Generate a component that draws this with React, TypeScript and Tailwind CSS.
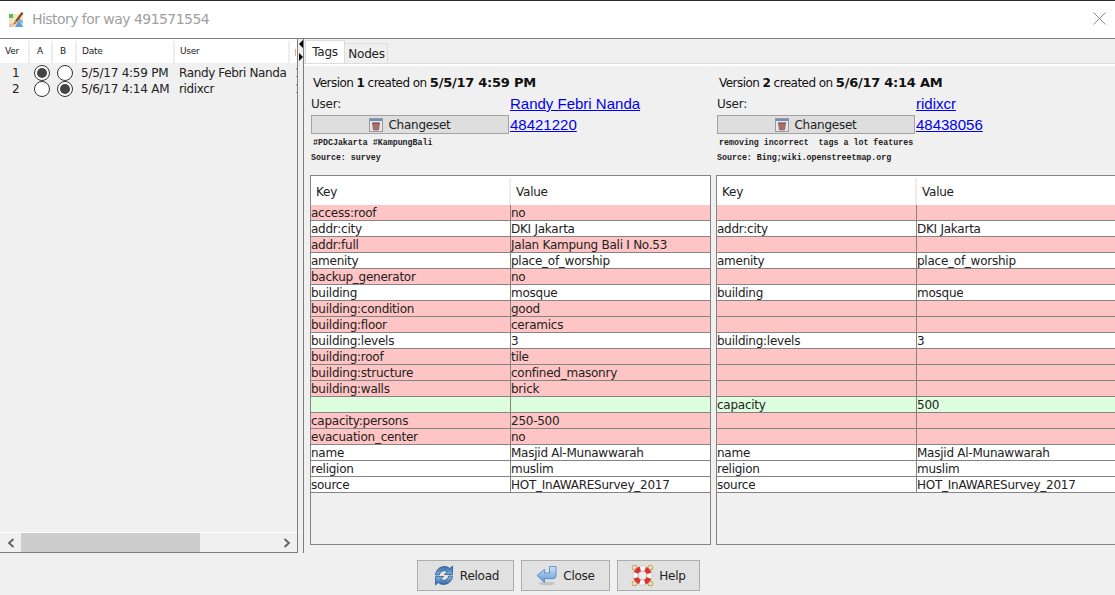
import React from "react";

const tahoma = "font-['DejaVu_Sans',sans-serif]";

type Row = { key: string; value: string; a: "red" | "white" | "green"; inA: boolean; inB: boolean };

const rows: Row[] = [
  { key: "access:roof", value: "no", a: "red", inA: true, inB: false },
  { key: "addr:city", value: "DKI Jakarta", a: "white", inA: true, inB: true },
  { key: "addr:full", value: "Jalan Kampung Bali I No.53", a: "red", inA: true, inB: false },
  { key: "amenity", value: "place_of_worship", a: "white", inA: true, inB: true },
  { key: "backup_generator", value: "no", a: "red", inA: true, inB: false },
  { key: "building", value: "mosque", a: "white", inA: true, inB: true },
  { key: "building:condition", value: "good", a: "red", inA: true, inB: false },
  { key: "building:floor", value: "ceramics", a: "red", inA: true, inB: false },
  { key: "building:levels", value: "3", a: "white", inA: true, inB: true },
  { key: "building:roof", value: "tile", a: "red", inA: true, inB: false },
  { key: "building:structure", value: "confined_masonry", a: "red", inA: true, inB: false },
  { key: "building:walls", value: "brick", a: "red", inA: true, inB: false },
  { key: "capacity", value: "500", a: "green", inA: false, inB: true },
  { key: "capacity:persons", value: "250-500", a: "red", inA: true, inB: false },
  { key: "evacuation_center", value: "no", a: "red", inA: true, inB: false },
  { key: "name", value: "Masjid Al-Munawwarah", a: "white", inA: true, inB: true },
  { key: "religion", value: "muslim", a: "white", inA: true, inB: true },
  { key: "source", value: "HOT_InAWARESurvey_2017", a: "white", inA: true, inB: true },
];

const rowBg = { red: "bg-[#ffc4c4]", white: "bg-white", green: "bg-[#deffde]" };

function Radio({ on }: { on: boolean }) {
  return (
    <span className="flex h-[16px] w-[16px] items-center justify-center rounded-full border border-[#333] bg-white">
      {on && <span className="h-[10px] w-[10px] rounded-full bg-[#444]" />}
    </span>
  );
}

function ChangesetIcon() {
  return (
    <svg width="14" height="14" viewBox="0 0 14 14">
      <rect x="0.5" y="0.5" width="13" height="13" fill="#e8e8e8" stroke="#9a9a9a" />
      <rect x="1" y="1" width="12" height="2" fill="#6b8fc4" />
      <path d="M3.500 5h7l-.8 7H4.300z" fill="#a86f6a" stroke="#7a4a48" strokeWidth="0.5" />
      <rect x="3" y="4.500" width="8" height="1.500" fill="#8e5a56" />
    </svg>
  );
}

function ReloadIcon() {
  return (
    <svg width="20" height="21" viewBox="0 0 20 21">
      <defs>
        <linearGradient id="reloadTop" x1="0" y1="0" x2="0" y2="1">
          <stop offset="0" stopColor="#2f6aa8" />
          <stop offset="1" stopColor="#7fb0df" />
        </linearGradient>
        <linearGradient id="reloadBottom" x1="0" y1="0" x2="0" y2="1">
          <stop offset="0" stopColor="#8db9e3" />
          <stop offset="1" stopColor="#2b649f" />
        </linearGradient>
      </defs>
      <path d="M1.500 10C2 4.500 6 1.500 10.500 1.500c2.300 0 4 .8 5.300 2L18.500 1v8.500h-8l2.700-2.700c-.8-.7-1.800-1.100-3-1.100-2.500 0-4.500 1.700-4.900 4.300z" fill="url(#reloadTop)" stroke="#1f4f85" strokeWidth="0.7" />
      <path d="M18.500 11c-.5 5.500-4.500 8.500-9 8.500-2.300 0-4-.8-5.300-2L1.500 20v-8.500h8l-2.700 2.700c.8.700 1.800 1.100 3 1.100 2.500 0 4.500-1.700 4.900-4.300z" fill="url(#reloadBottom)" stroke="#1f4f85" strokeWidth="0.7" />
    </svg>
  );
}

function CloseIcon() {
  return (
    <svg width="21" height="21" viewBox="0 0 21 21">
      <defs>
        <linearGradient id="closeArrow" x1="0" y1="0" x2="0" y2="1">
          <stop offset="0" stopColor="#cfe2f7" />
          <stop offset="1" stopColor="#5f95d4" />
        </linearGradient>
      </defs>
      <ellipse cx="11" cy="18.500" rx="8" ry="1.800" fill="#c4c4c4" />
      <path d="M1 10.500 8.500 4.500V8h5V1.500h6.500V11c0 1.700-1 2.700-2.700 2.700H8.500v3.800z" fill="url(#closeArrow)" stroke="#4f83bf" strokeWidth="0.8" />
    </svg>
  );
}

function HelpIcon() {
  return (
    <svg width="23" height="23" viewBox="0 0 23 23">
      <circle cx="3.500" cy="3.500" r="2.300" fill="none" stroke="#d6ad45" strokeWidth="1.100" />
      <circle cx="19.500" cy="3.500" r="2.300" fill="none" stroke="#d6ad45" strokeWidth="1.100" />
      <circle cx="3.500" cy="19.500" r="2.300" fill="none" stroke="#d6ad45" strokeWidth="1.100" />
      <circle cx="19.500" cy="19.500" r="2.300" fill="none" stroke="#d6ad45" strokeWidth="1.100" />
      <circle cx="11.500" cy="11.500" r="7" fill="none" stroke="#f7f7f7" strokeWidth="5" />
      <circle
        cx="11.500"
        cy="11.500"
        r="7"
        fill="none"
        stroke="#e0322f"
        strokeWidth="5"
        strokeDasharray="6 5"
        transform="rotate(21 11.500 11.500)"
      />
      <circle cx="11.500" cy="11.500" r="9.700" fill="none" stroke="#b9b9b9" strokeWidth="0.5" />
      <circle cx="11.500" cy="11.500" r="4.300" fill="#eeeeee" stroke="#9a9a9a" strokeWidth="0.6" />
    </svg>
  );
}

function AppLogo() {
  return (
    <svg width="17" height="17" viewBox="0 0 17 17">
      <rect x="1" y="3" width="14" height="13" fill="#f0e6c4" />
      <rect x="1" y="3" width="4" height="4" fill="#58bf58" />
      <path d="M7 16 11 9l4 7z" fill="#5f9fe0" />
      <path d="M9 8l6 5v-3l-4-3z" fill="#7fb2e8" />
      <path d="M1 13l6-1-2 4H1z" fill="#e9bfa8" />
      <path d="M7 10 13.500 1 15.500 2.200 9 11z" fill="#8a4a1e" />
      <path d="M5 13l2-3 2 1.200-2 2.300z" fill="#c97a2c" />
    </svg>
  );
}

function VersionColumn({
  version,
  date,
  user,
  changeset,
  comment,
  source,
  side,
}: {
  version: string;
  date: string;
  user: string;
  changeset: string;
  comment: string;
  source: string;
  side: "a" | "b";
}) {
  return (
    <div className="flex w-[401px] shrink-0 flex-col">
      <div className="flex h-[30px] items-center pl-[3px] pt-[4px] text-[12px] text-[#111]">
        <span className="tracking-[-0.55px]">
          Version&nbsp;<b>{version}</b>&nbsp;created on&nbsp;
        </span>
        <b className="text-[13px]">{date}</b>
      </div>
      <div className="grid grid-cols-[199px_1fr] items-center pl-[1px]">
        <span className="h-[16px] text-[12px] leading-[17px] text-[#222]">User:</span>
        <a className="h-[16px] font-['Liberation_Sans',sans-serif] text-[15px] leading-[16px] tracking-normal text-[#0000ee] underline">
          {user}
        </a>
      </div>
      <div className="mt-[3px] grid grid-cols-[199px_1fr] items-center pl-[1px]">
        <button className="flex h-[19px] w-[198px] items-center justify-center gap-[5px] border border-[#a3a3a3] bg-[#dedede] text-[12px] text-[#222]">
          <ChangesetIcon />
          Changeset
        </button>
        <a className="font-['Liberation_Sans',sans-serif] text-[15px] leading-[19px] tracking-normal text-[#0000ee] underline">
          {changeset}
        </a>
      </div>
      <div className="mt-[1px] flex h-[15px] items-center pl-[3px] pt-[2px] font-['Liberation_Mono',monospace] text-[8.300px] font-bold tracking-normal whitespace-pre text-[#222]">
        {comment}
      </div>
      <div className="flex h-[15px] items-center pl-[1px] pt-[2px] font-['Liberation_Mono',monospace] text-[8.300px] font-bold tracking-normal text-[#222]">
        {source}
      </div>
      <div className="mt-[10px] flex h-[370px] flex-col border border-[#848484] bg-[#f0f0f0]">
        <div className="grid h-[29px] shrink-0 grid-cols-[200px_1fr] bg-white pt-[2px] text-[12px] text-[#222]">
          <span className="flex items-center border-r-2 border-[#eeeeee] pl-[5px]">Key</span>
          <span className="flex items-center pl-[5px]">Value</span>
        </div>
        {rows.map((row) => {
          const present = side === "a" ? row.inA : row.inB;
          return (
            <div
              key={row.key}
              className={`grid h-[16px] shrink-0 grid-cols-[200px_1fr] border-b border-[#848484] text-[12px] leading-[17px] text-[#222] ${rowBg[row.a]}`}
            >
              <span className="overflow-hidden border-r border-[#848484]">{present ? row.key : ""}</span>
              <span className="overflow-hidden">{present ? row.value : ""}</span>
            </div>
          );
        })}
      </div>
    </div>
  );
}

export default function App() {
  return (
    <div className={`flex h-[595px] w-[1115px] flex-col overflow-hidden bg-[#f0f0f0] ${tahoma} tracking-[-0.25px]`}>
      <div className="h-px shrink-0 bg-[#2b2b2b]" />

      {/* title bar */}
      <div className="flex h-[38px] shrink-0 items-center justify-between border-b border-[#7d7d7d] bg-white pl-[8px] pr-[9px]">
        <div className="flex items-center gap-[7px]">
          <AppLogo />
          <span className="text-[14px] tracking-[-0.55px] text-[#a0a0a0]">History for way 491571554</span>
        </div>
        <svg className="mb-[2px]" width="13" height="13" viewBox="0 0 13 13">
          <path d="M.5.5l12 12M12.500.5l-12 12" stroke="#8a8a8a" strokeWidth="1" fill="none" />
        </svg>
      </div>

      <div className="flex h-[514px] shrink-0">
        {/* version list */}
        <div className="flex w-[298px] shrink-0 flex-col border-r border-[#7d7d7d]">
          <div className="grid h-[24px] shrink-0 grid-cols-[30px_23px_24px_98px_115px_1fr] bg-white pt-[2px] text-[9px] text-[#222]">
            <span className="flex items-center border-r-2 border-[#eeeeee] pl-[5px]">Ver</span>
            <span className="flex items-center border-r-2 border-[#eeeeee] pl-[7px]">A</span>
            <span className="flex items-center border-r-2 border-[#eeeeee] pl-[7px]">B</span>
            <span className="flex items-center border-r-2 border-[#eeeeee] pl-[5px]">Date</span>
            <span className="flex items-center border-r-2 border-[#eeeeee] pl-[5px]">User</span>
            <span className="flex items-center pl-[5px]">
              <span className="h-[7px] w-[1px] bg-[#e8b060]" />
            </span>
          </div>
          <div className="flex-1 pt-[1px]">
            {[
              { ver: "1", date: "5/5/17 4:59 PM", user: "Randy Febri Nanda", a: true },
              { ver: "2", date: "5/6/17 4:14 AM", user: "ridixcr", a: false },
            ].map((v) => (
              <div key={v.ver} className="grid h-[16px] grid-cols-[34px_23px_24px_98px_116px_1fr] items-center text-[12px] text-[#222]">
                <span className="pl-[12px]">{v.ver}</span>
                <span><Radio on={v.a} /></span>
                <span><Radio on={!v.a} /></span>
                <span className="whitespace-nowrap">{v.date}</span>
                <span className="whitespace-nowrap tracking-[-0.37px]">{v.user}</span>
                <span className="overflow-hidden">1</span>
              </div>
            ))}
          </div>
          <div className="flex h-[20px] shrink-0 items-center border-t border-white">
            <span className="flex w-[21px] justify-center">
              <svg width="8" height="10" viewBox="0 0 8 10">
                <path d="M6.500 1 2 5l4.500 4" fill="none" stroke="#606060" strokeWidth="1.800" />
              </svg>
            </span>
            <span className="h-[19px] w-[179px] bg-[#cdcdcd]" />
            <span className="flex-1" />
            <span className="flex w-[21px] justify-center">
              <svg width="8" height="10" viewBox="0 0 8 10">
                <path d="M1.500 1 6 5 1.500 9" fill="none" stroke="#606060" strokeWidth="1.800" />
              </svg>
            </span>
          </div>
          <div className="h-px bg-[#7d7d7d]" />
        </div>

        {/* split divider */}
        <div className="flex w-[5px] shrink-0 flex-col items-center pt-[1px]">
          <span className="h-0 w-0 border-y-[4px] border-r-[4px] border-y-transparent border-r-black" />
          <span className="mt-[5px] h-0 w-0 border-y-[4px] border-l-[4px] border-y-transparent border-l-black" />
        </div>

        {/* tabs */}
        <div className="flex min-w-0 flex-1 flex-col border-l border-[#7d7d7d]">
          <div className="flex h-[25px] shrink-0 items-end border-b border-[#dcdcdc] pl-[1px] text-[12px] text-[#222]">
            <span className="flex h-[23px] w-[40px] items-center justify-center border border-b-0 border-[#dcdcdc] bg-white">Tags</span>
            <span className="flex h-[20px] w-[43px] items-center justify-center border border-b-0 border-l-0 border-[#dcdcdc] bg-[#f0f0f0] pl-[1px]">Nodes</span>
          </div>
          <div className="flex min-h-0 flex-1 gap-[5px] overflow-hidden border-t-2 border-white pl-[6px]">
            <VersionColumn
              version="1"
              date="5/5/17 4:59 PM"
              user="Randy Febri Nanda"
              changeset="48421220"
              comment="#PDCJakarta #KampungBali"
              source="Source: survey"
              side="a"
            />
            <VersionColumn
              version="2"
              date="5/6/17 4:14 AM"
              user="ridixcr"
              changeset="48438056"
              comment="removing incorrect  tags a lot features"
              source="Source: Bing;wiki.openstreetmap.org"
              side="b"
            />
          </div>
        </div>
      </div>

      {/* bottom buttons */}
      <div className="flex flex-1 items-center justify-center gap-[7px] pl-[2px] pt-[3px] text-[12px] text-[#222]">
        <button className="flex h-[31px] w-[97px] items-center justify-center gap-[6px] border border-[#adadad] bg-[#e1e1e1] pl-[2px]">
          <ReloadIcon />
          Reload
        </button>
        <button className="flex h-[31px] w-[89px] items-center justify-center gap-[6px] border border-[#adadad] bg-[#e1e1e1]">
          <CloseIcon />
          Close
        </button>
        <button className="flex h-[31px] w-[83px] items-center justify-center gap-[5px] border border-[#adadad] bg-[#e1e1e1]">
          <HelpIcon />
          Help
        </button>
      </div>
    </div>
  );
}
